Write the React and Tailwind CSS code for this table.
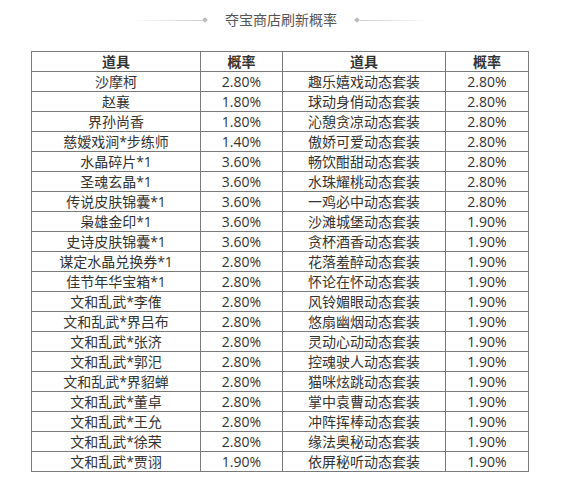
import React from "react";

const rows = [
  ["沙摩柯", "2.80%", "趣乐嬉戏动态套装", "2.80%"],
  ["赵襄", "1.80%", "球动身俏动态套装", "2.80%"],
  ["界孙尚香", "1.80%", "沁憩贪凉动态套装", "2.80%"],
  ["慈嫒戏涧*步练师", "1.40%", "傲娇可爱动态套装", "2.80%"],
  ["水晶碎片*1", "3.60%", "畅饮酣甜动态套装", "2.80%"],
  ["圣魂玄晶*1", "3.60%", "水珠耀桃动态套装", "2.80%"],
  ["传说皮肤锦囊*1", "3.60%", "一鸡必中动态套装", "2.80%"],
  ["枭雄金印*1", "3.60%", "沙滩城堡动态套装", "1.90%"],
  ["史诗皮肤锦囊*1", "3.60%", "贪杯酒香动态套装", "1.90%"],
  ["谋定水晶兑换券*1", "2.80%", "花落羞醉动态套装", "1.90%"],
  ["佳节年华宝箱*1", "2.80%", "怀论在怀动态套装", "1.90%"],
  ["文和乱武*李傕", "2.80%", "风铃媚眼动态套装", "1.90%"],
  ["文和乱武*界吕布", "2.80%", "悠扇幽烟动态套装", "1.90%"],
  ["文和乱武*张济", "2.80%", "灵动心动动态套装", "1.90%"],
  ["文和乱武*郭汜", "2.80%", "控魂驶人动态套装", "1.90%"],
  ["文和乱武*界貂蝉", "2.80%", "猫咪炫跳动态套装", "1.90%"],
  ["文和乱武*董卓", "2.80%", "掌中袁曹动态套装", "1.90%"],
  ["文和乱武*王允", "2.80%", "冲阵挥棒动态套装", "1.90%"],
  ["文和乱武*徐荣", "2.80%", "缘法奥秘动态套装", "1.90%"],
  ["文和乱武*贾诩", "1.90%", "依屏秘听动态套装", "1.90%"],
];

const cell =
  "border border-[#7a7a7a] h-[20px] p-0 text-center leading-[19px] whitespace-nowrap";

export default function App() {
  return (
    <div
      className="w-[562px] h-[494px] bg-white text-[#333] text-[14px]"
      style={{ fontFamily: '"Open Sans", "Noto Sans CJK SC", sans-serif' }}
    >
      {/* Title */}
      <div className="flex items-center justify-center pt-[10px] h-[30px]">
        <div className="w-[70px] h-px bg-gradient-to-r from-transparent to-[#ccc]" />
        <div className="w-[4px] h-[4px] rotate-45 bg-[#bbb] ml-px" />
        <div className="mx-[18px] text-[#555] leading-[20px]">夺宝商店刷新概率</div>
        <div className="w-[4px] h-[4px] rotate-45 bg-[#bbb] mr-px" />
        <div className="w-[70px] h-px bg-gradient-to-l from-transparent to-[#ccc]" />
      </div>

      <div className="pt-[21px] pl-[31px]">
        <table className="border-collapse table-fixed w-[497px]">
          <colgroup>
            <col className="w-[169px]" />
            <col className="w-[82px]" />
            <col className="w-[163px]" />
            <col className="w-[83px]" />
          </colgroup>
          <thead>
            <tr>
              <th className={cell + " font-semibold"}>道具</th>
              <th className={cell + " font-semibold"}>概率</th>
              <th className={cell + " font-semibold"}>道具</th>
              <th className={cell + " font-semibold"}>概率</th>
            </tr>
          </thead>
          <tbody>
            {rows.map((r, i) => (
              <tr key={i}>
                {r.map((v, j) => (
                  <td key={j} className={cell + " font-normal"}>
                    {v}
                  </td>
                ))}
              </tr>
            ))}
          </tbody>
        </table>
      </div>
    </div>
  );
}
